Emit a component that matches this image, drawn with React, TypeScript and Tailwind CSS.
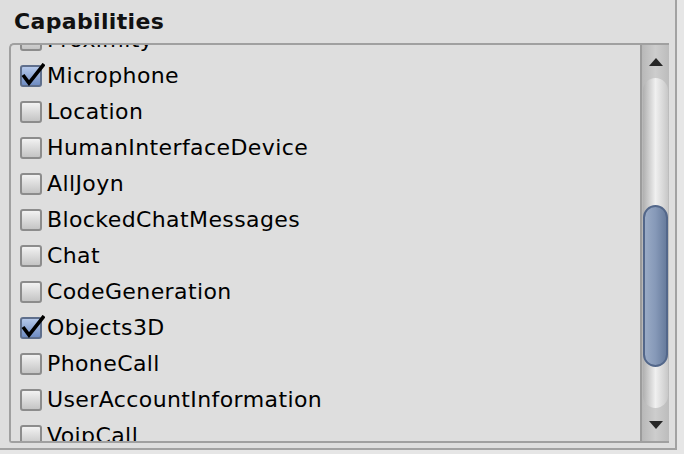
import React from "react";

const items: { label: string; checked: boolean }[] = [
  { label: "Proximity", checked: false },
  { label: "Microphone", checked: true },
  { label: "Location", checked: false },
  { label: "HumanInterfaceDevice", checked: false },
  { label: "AllJoyn", checked: false },
  { label: "BlockedChatMessages", checked: false },
  { label: "Chat", checked: false },
  { label: "CodeGeneration", checked: false },
  { label: "Objects3D", checked: true },
  { label: "PhoneCall", checked: false },
  { label: "UserAccountInformation", checked: false },
  { label: "VoipCall", checked: false },
];

const CheckBox = ({ checked }: { checked: boolean }) => (
  <div className="relative w-[22px] h-[22px] shrink-0">
    <div
      className={
        checked
          ? "w-full h-full rounded-[3px] border-2 border-[#5f6f8c] bg-gradient-to-b from-[#b4c8ea] to-[#6f8cc2]"
          : "w-full h-full rounded-[3px] border-2 border-[#8c8c8c] bg-gradient-to-b from-[#f2f2f2] to-[#c4c4c4]"
      }
    />
    {checked && (
      <svg className="absolute left-[1px] top-[-2px]" width="24" height="24" viewBox="0 0 24 24">
        <path d="M2 12 L8 20 L23 1" fill="none" stroke="#000" strokeWidth="3.6" strokeLinejoin="miter" />
      </svg>
    )}
  </div>
);

const Row = ({ label, checked }: { label: string; checked: boolean }) => (
  <div className="h-[36px] flex items-center gap-[5px] pl-[9px]">
    <CheckBox checked={checked} />
    <span className="text-[22px] tracking-[0.4px] text-black leading-none">{label}</span>
  </div>
);

const Arrow = ({ up }: { up: boolean }) => (
  <svg width="14" height="8" viewBox="0 0 14 8">
    <path d={up ? "M7 0 L14 8 L0 8 Z" : "M0 0 L14 0 L7 8 Z"} fill="#262626" />
  </svg>
);

const Scrollbar = () => (
  <div className="w-[29px] flex flex-col border-l-2 border-[#9c9c9c] bg-gradient-to-r from-[#b8b8b8] via-[#cdcdcd] to-[#bcbcbc]">
    <div className="h-[33px] flex items-center justify-center">
      <Arrow up />
    </div>
    <div className="flex-1 mx-[1px] rounded-full bg-gradient-to-r from-[#b0b0b0] via-[#f0f0f0] to-[#c8c8c8] flex flex-col">
      <div className="mt-[127px] h-[162px] rounded-full border-2 border-[#53678a] bg-gradient-to-r from-[#9aabc6] via-[#8699b8] to-[#687c9d]" />
    </div>
    <div className="h-[33px] flex items-center justify-center">
      <Arrow up={false} />
    </div>
  </div>
);

export default function App() {
  return (
    <div className="w-[684px] h-[454px] bg-[#e6e6e6] font-['DejaVu_Sans',sans-serif] overflow-hidden">
      <div className="w-[677px] h-[450px] bg-[#dedede] border-r-2 border-b-2 border-[#a2a2a2] flex flex-col">
        <div className="h-[43px] pl-[14px] pt-[5px] text-[22px] font-bold tracking-[0.35px] text-[#111]">
          Capabilities
        </div>
        <div className="ml-[9px] w-[660px] h-[400px] border-t-2 border-l-2 border-b-2 border-[#a0a0a0] rounded-tl-[5px] rounded-bl-[3px] flex">
          <div className="flex-1 overflow-hidden">
            <div className="-mt-[23px]">
              {items.map((it) => (
                <Row key={it.label} label={it.label} checked={it.checked} />
              ))}
            </div>
          </div>
          <Scrollbar />
        </div>
      </div>
    </div>
  );
}
